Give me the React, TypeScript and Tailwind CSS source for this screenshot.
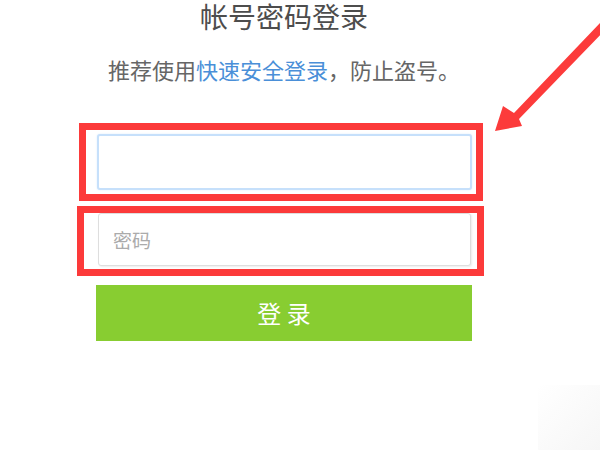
export default function App() {
  return (
    <div className="relative h-[450px] w-[600px] overflow-hidden bg-white font-['Noto_Sans_CJK_SC','Noto_Sans',sans-serif]">
      <div className="ml-[96px] flex w-[376px] flex-col">
        <h1 className="text-center text-[28px] leading-[32px] font-normal text-[#4d4d4d]">帐号密码登录</h1>
        <p className="mt-[26px] text-center text-[22px] leading-[22px] text-[#666666]">
          推荐使用<a className="text-[#4a8fd8]">快速安全登录</a>，防止盗号。
        </p>

        <div className="-ml-[17px] -mr-[11px] mt-[43px] border-[7px] border-[#fc3a3a] pb-[4px] pl-[11px] pr-[4px] pt-[4px]">
          <input
            className="block h-[56px] w-full rounded-[3px] border-2 border-[#c6e0fb] bg-white px-[14px] text-[19px] shadow-[0_0_2px_#d9ebfd] outline-none"
            type="text"
          />
        </div>

        <div className="-ml-[19px] -mr-[12px] mt-[5px] border-[7px] border-[#fc3a3a] pb-[3px] pl-[14px] pr-[6px]">
          <input
            className="block h-[53px] w-full rounded-[3px] border border-[#dedede] bg-white px-[14px] text-[19px] shadow-[1px_1px_2px_rgba(0,0,0,0.08)] outline-none placeholder:text-[#ababab]"
            type="password"
            placeholder="密码"
          />
        </div>

        <button className="mt-[9px] h-[56px] w-full bg-[#88cd31] text-[24px] text-white">登 录</button>
      </div>

      {/* annotation arrow */}
      <svg className="pointer-events-none absolute left-0 top-0" width="600" height="450" viewBox="0 0 600 450">
        <polygon
          points="495,131 503,106 514,113 600,23 606,29 519,119 522,126"
          fill="#fc3b3b"
        />
      </svg>

      <div className="absolute bottom-0 right-0 h-[65px] w-[62px] bg-gradient-to-br from-white to-[#f6f6f6]" />
    </div>
  )
}
